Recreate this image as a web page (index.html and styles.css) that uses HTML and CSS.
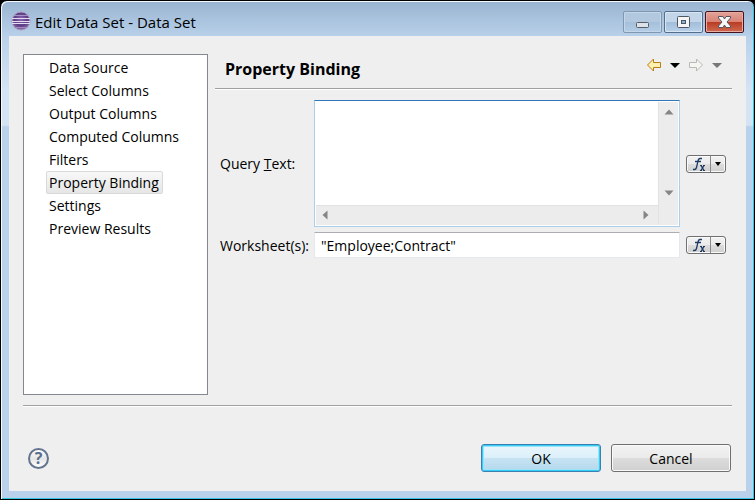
FILE: index.html
```html
<!DOCTYPE html>
<html lang="en">
<head>
<meta charset="utf-8">
<title>Edit Data Set - Data Set</title>
<link rel="stylesheet" href="styles.css">
</head>
<body>
<div class="window">
  <header class="titlebar">
    <svg class="logo" viewBox="0 0 20 20" aria-hidden="true">
      <defs>
        <radialGradient id="orb" cx=".5" cy=".4" r=".6"><stop offset="0" stop-color="#8a68b0"/><stop offset=".6" stop-color="#5d3c86"/><stop offset="1" stop-color="#8d79a8"/></radialGradient>
      </defs>
      <circle cx="10" cy="10" r="9" fill="url(#orb)" stroke="#a997bd"/>
      <path d="M3 4.5h14" stroke="#a894c4" stroke-width="1"/>
      <path d="M1 7.5h18M1 10.5h18M1 12.5h18" stroke="#e4dcf0" stroke-width="1"/>
      <path d="M5 16.5h10" stroke="#a486c4" stroke-width="1"/>
    </svg>
    <h1 class="caption">Edit Data Set - Data Set</h1>
    <div class="window-buttons">
      <button class="winbtn dim" type="button" aria-label="Minimize"><svg width="37" height="20" viewBox="0 0 37 20"><rect x="12.5" y="10.5" width="12" height="5" rx="1" fill="#dce3e8" stroke="#555b68"/></svg></button>
      <button class="winbtn" type="button" aria-label="Maximize"><svg width="37" height="20" viewBox="0 0 37 20"><rect x="12.5" y="4.5" width="12" height="11" rx="1" fill="#f4f5f6" stroke="#50565f"/><rect x="16.5" y="8.5" width="4" height="3" fill="#8eb0d2" stroke="#50565f"/></svg></button>
      <button class="winbtn close" type="button" aria-label="Close"><svg width="37" height="20" viewBox="0 0 37 20"><path d="M12.5 4.5H17L18.5 7L20 4.500H24.5V6L21 10L24.5 14V15.5H20L18.5 13L17 15.5H12.5V14L16 10L12.5 6Z" fill="#f7f7f7" stroke="#55545e" stroke-linejoin="round"/></svg></button>
    </div>
  </header>

  <main class="client">
    <div class="columns">
      <nav class="pages" aria-label="Pages">
        <a href="#">Data Source</a>
        <a href="#">Select Columns</a>
        <a href="#">Output Columns</a>
        <a href="#">Computed Columns</a>
        <a href="#">Filters</a>
        <a href="#" class="selected" aria-current="page">Property Binding</a>
        <a href="#">Settings</a>
        <a href="#">Preview Results</a>
      </nav>
      <section class="page">
        <div class="page-head">
          <h2>Property Binding</h2>
          <div class="history">
            <button type="button" aria-label="Back"><svg width="16" height="14" viewBox="0 0 16 14"><path d="M1.5 7L7.5 1V4.5H14.5V9.5H7.5V13Z" fill="#fff0b0" stroke="#b87c12" stroke-linejoin="round"/></svg></button>
            <button type="button" aria-label="Back history"><svg width="10" height="14" viewBox="0 0 10 14"><path d="M0 5H10L5 10Z" fill="#000"/></svg></button>
            <button type="button" aria-label="Forward" disabled><svg width="16" height="14" viewBox="0 0 16 14"><path d="M14.5 7L8.5 1V4.5H1.5V9.5H8.5V13Z" fill="#f5f5f1" stroke="#b9b9b4" stroke-linejoin="round"/></svg></button>
            <button type="button" aria-label="Forward history" disabled><svg width="10" height="14" viewBox="0 0 10 14"><path d="M0 5H10L5 10Z" fill="#777"/></svg></button>
          </div>
        </div>
        <form class="form">
          <label for="query">Query <u>T</u>ext:</label>
          <div class="query-box">
            <textarea id="query"></textarea>
            <div class="vbar">
              <svg width="10" height="6" viewBox="0 0 10 6"><path d="M.5 5.5L5 .5L9.5 5.5Z" fill="#858585"/></svg>
              <svg width="10" height="6" viewBox="0 0 10 6"><path d="M.5 .5L5 5.5L9.5 .5Z" fill="#858585"/></svg>
            </div>
            <div class="hbar">
              <svg width="6" height="10" viewBox="0 0 6 10"><path d="M5.5 .5L.5 5L5.5 9.5Z" fill="#858585"/></svg>
              <svg width="6" height="10" viewBox="0 0 6 10"><path d="M.5 .5L5.5 5L.5 9.5Z" fill="#858585"/></svg>
            </div>
          </div>
          <div class="fx">
            <button class="fx-main" type="button" aria-label="Expression for query text"><svg width="14" height="14" viewBox="0 0 14 14" fill="none" stroke="#1f3c66"><path d="M10 1.5H8Q6.500 1.500 6 4L4.500 10.500Q4 12.500 2.500 12.500H1M3 4.500H9" stroke-width="1.300"/><path d="M8 8.500H10M11 8.500H13M8 13.500H10M11 13.500H13"/><path d="M9 8.500L12 13.500M12 8.500L9 13.500" stroke-width="1.400"/></svg></button>
            <button class="fx-menu" type="button" aria-label="Expression menu for query text"><svg width="6" height="4" viewBox="0 0 6 4"><path d="M0 0H6L3 4Z"/></svg></button>
          </div>
          <label for="sheets">Worksheet(s):</label>
          <input id="sheets" type="text" value="&quot;Employee;Contract&quot;">
          <div class="fx">
            <button class="fx-main" type="button" aria-label="Expression for worksheets"><svg width="14" height="14" viewBox="0 0 14 14" fill="none" stroke="#1f3c66"><path d="M10 1.5H8Q6.500 1.500 6 4L4.500 10.500Q4 12.500 2.500 12.500H1M3 4.500H9" stroke-width="1.300"/><path d="M8 8.500H10M11 8.500H13M8 13.500H10M11 13.500H13"/><path d="M9 8.500L12 13.500M12 8.500L9 13.500" stroke-width="1.400"/></svg></button>
            <button class="fx-menu" type="button" aria-label="Expression menu for worksheets"><svg width="6" height="4" viewBox="0 0 6 4"><path d="M0 0H6L3 4Z"/></svg></button>
          </div>
        </form>
      </section>
    </div>
    <footer class="actions">
      <button class="help" type="button" aria-label="Help">?</button>
      <button class="push default" type="button">OK</button>
      <button class="push" type="button">Cancel</button>
    </footer>
  </main>
</div>
</body>
</html>
```
FILE: styles.css
```css
* {
  box-sizing: border-box;
}

body {
  margin: 0;
  background: #000;
  color: #000;
  font: 14px/23px "Open Sans", "Noto Sans", sans-serif;
}

button,
input,
textarea {
  margin: 0;
  padding: 0;
  border: 0;
  color: inherit;
  font: inherit;
}

svg {
  display: block;
}

.window {
  display: flex;
  flex-direction: column;
  min-height: 100vh;
  padding: 0 8px 8px;
  border: 1px solid #000;
  border-radius: 7px 7px 0 0;
  background: linear-gradient(#99b4d1, #b9d1ea 36px, #d5e4f5 90px, #d5e4f5 124px, #b9d1ea 126px);
  box-shadow: inset 1px 1px #f4faff, inset -1px -1px #35c5e3;
}

.titlebar {
  display: flex;
  align-items: flex-start;
  height: 35px;
  padding: 10px 2px 0;
}

.logo {
  width: 20px;
  height: 20px;
}

.caption {
  flex: 1;
  margin: 0 0 0 4px;
  font-size: 15px;
  font-weight: 400;
  line-height: 23px;
}

.window-buttons {
  display: flex;
  gap: 2px;
}

.winbtn {
  width: 39px;
  height: 22px;
  border: 1px solid #546f8d;
  border-radius: 2px;
  background: linear-gradient(#c3d5e8 48%, #a2bdd9 50%, #b9d1ea);
  box-shadow: inset 0 0 0 1px #d8e6f4;
}

.winbtn.dim {
  border-color: #8097b2;
  background: linear-gradient(#b2c8de 48%, #a5bfda 50%, #b4cde7);
  box-shadow: inset 0 0 0 1px #c4d7ea;
}

.winbtn.close {
  border-color: #431420;
  background: linear-gradient(#e3a297, #d98476 48%, #b83a22 50%, #cf6a50);
  box-shadow: inset 0 0 0 1px #e8ada2;
}

.client {
  display: flex;
  flex: 1;
  flex-direction: column;
  padding: 18px 14px;
  background: #efefef;
}

.columns {
  display: flex;
  flex: 1;
  gap: 7px;
  padding-bottom: 10px;
  border-bottom: 1px solid #a0a0a0;
  box-shadow: 0 1px #fff;
}

.pages {
  display: flex;
  flex: 0 0 185px;
  flex-direction: column;
  align-items: flex-start;
  padding: 1px 0 0 22px;
  border: 1px solid #828790;
  background: #fff;
}

.pages a {
  padding: 0 3px 0 2px;
  border: 1px solid transparent;
  border-radius: 2px;
  color: inherit;
  line-height: 21px;
  text-decoration: none;
}

.pages .selected {
  border-color: #d9d9d9;
  background: linear-gradient(#f8f8f8, #e6e6e6);
}

.page {
  flex: 1;
  min-width: 0;
}

.page-head {
  display: flex;
  justify-content: space-between;
  height: 35px;
  padding: 4px 10px 0;
  border-bottom: 1px solid #a0a0a0;
  box-shadow: 0 1px #fff;
}

.page-head h2 {
  margin: 0;
  font-size: 16px;
  font-weight: 700;
}

.history {
  display: flex;
  gap: 8px;
}

.history button {
  height: 14px;
  background: none;
}

.form {
  display: grid;
  grid-template-columns: 88px 1fr 40px;
  align-items: center;
  gap: 5px 6px;
  padding: 11px 6px 0 5px;
}

.form label {
  white-space: nowrap;
}

.query-box {
  display: grid;
  grid-template-columns: 1fr 20px;
  grid-template-rows: 1fr 20px;
  height: 127px;
  padding: 1px;
  border: 1px solid #abcfeb;
  border-top-color: #3077b7;
  background: #fff;
}

.query-box textarea {
  width: 100%;
  height: 100%;
  padding: 2px 5px;
  outline: 0;
  resize: none;
}

.vbar,
.hbar {
  display: flex;
  align-items: center;
  justify-content: space-between;
  background: #ececec;
}

.vbar {
  grid-row: 1 / 3;
  grid-column: 2;
  flex-direction: column;
  padding: 7px 0 29px;
  border-left: 1px solid #e2e2e2;
}

.hbar {
  grid-row: 2;
  grid-column: 1;
  padding: 0 9px 2px 6px;
  border-top: 1px solid #e2e2e2;
}

.form input {
  width: 100%;
  height: 26px;
  padding: 0 6px;
  border: 1px solid #e3e9ef;
  border-top-color: #abadb3;
  border-radius: 1px;
  background: #fff;
}

.fx {
  display: flex;
  height: 18px;
  border: 1px solid #707070;
  border-radius: 3px;
  background: linear-gradient(#f2f2f2, #ebebeb 48%, #dddddd 50%, #cfcfcf);
  box-shadow: inset 0 0 0 1px #fafafa;
}

.fx button {
  display: grid;
  place-items: center;
  background: none;
}

.fx-main {
  flex: 1;
}

.form .fx-menu {
  width: 15px;
  border-left: 1px solid #8a8a8a;
}

.actions {
  display: flex;
  align-items: center;
  gap: 10px;
  padding: 38px 1px 1px 5px;
}

.help {
  width: 21px;
  height: 21px;
  margin-right: auto;
  border: 2px solid #64748f;
  border-radius: 50%;
  background: linear-gradient(#fff, #e5e5e5 50%, #fff);
  color: #5a6d8e;
  font-size: 16px;
  font-weight: 700;
  line-height: 16px;
}

.push {
  width: 120px;
  height: 28px;
  border: 1px solid #707070;
  border-radius: 3px;
  background: linear-gradient(#f2f2f2, #ebebeb 48%, #dddddd 50%, #cfcfcf);
  box-shadow: inset 0 0 0 1px #fafafa;
}

.push.default {
  border-color: #3c7fb1;
  background: linear-gradient(#eaf5fb, #dcf0fa 48%, #c6e3f3 50%, #b5d8ec);
  box-shadow: inset 0 0 0 1px #35cdf6, inset 0 0 0 2px #9be5fa;
}
```
